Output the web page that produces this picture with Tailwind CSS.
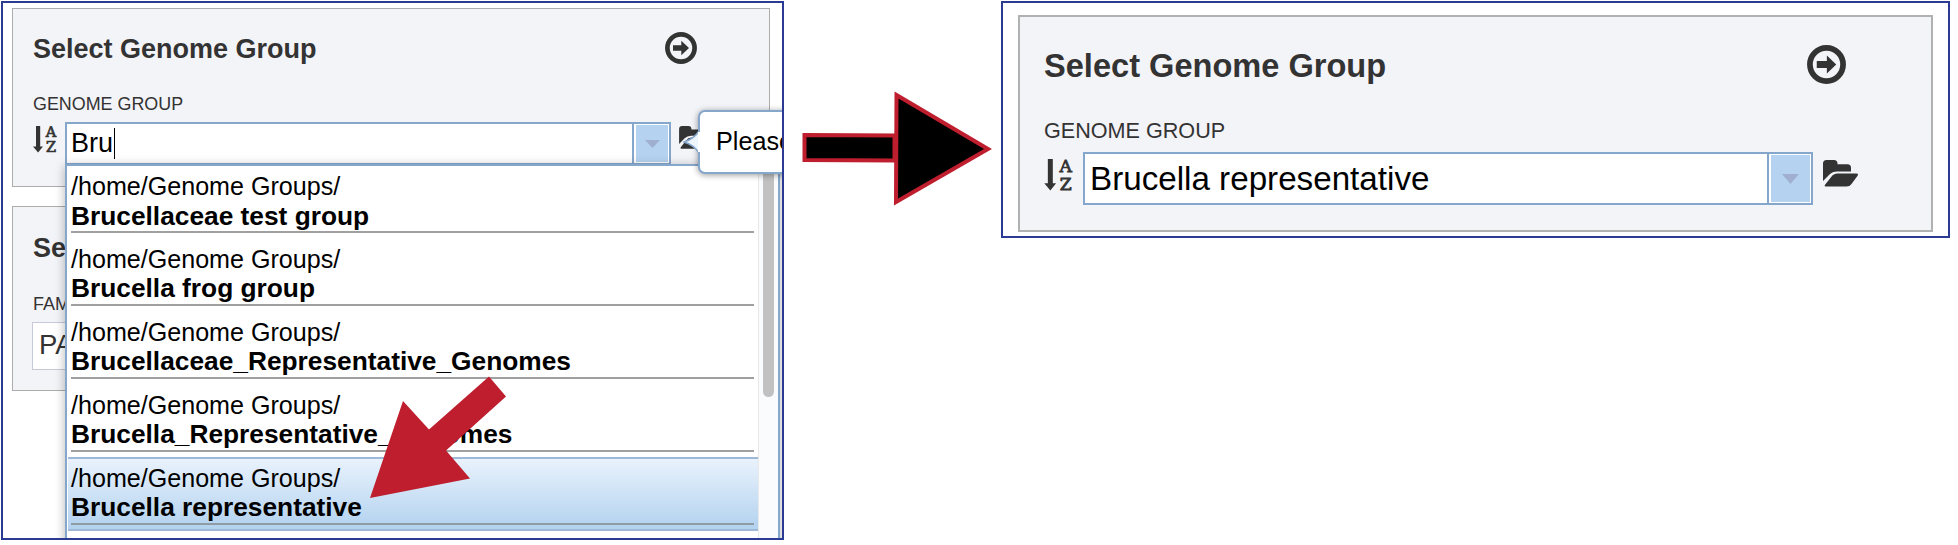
<!DOCTYPE html>
<html lang="en">
<head>
<meta charset="utf-8">
<title>Select Genome Group</title>
<script src="https://cdn.jsdelivr.net/npm/@tailwindcss/browser@4"></script>
</head>
<body class="bg-white font-['Liberation_Sans',Arial,sans-serif] w-[1958px] h-[545px] overflow-hidden">
<svg class="hidden">
  <symbol id="go" viewBox="0 0 32 32"><circle cx="16" cy="16" r="13.6" fill="none" stroke="#333" stroke-width="4.7"/><path fill="#333" d="M8 13.2h8.3V8.7L24 16l-7.700 7.300v-4.500H8z"/></symbol>
  <symbol id="folder" viewBox="0 0 35 27"><path fill="#333" d="M0 21V3.500Q0 0 3.500 0H11Q14.500 0 14.500 3.500V4.200H24.500Q28 4.200 28 7.700V11.500H14Q9.500 11.500 6.500 14.500zM2 24.800L8 17.200Q10.500 13.600 14.500 13.600H33.500Q36 13.600 34.400 16L28.500 24Q26.800 26.600 23.500 26.600H2.800Q1 26.600 2 24.800z"/></symbol>
  <symbol id="sort" viewBox="0 0 24 27"><path fill="#333" d="M3 0H7.200V20.500H10L5.100 26.600 0 20.500H3z"/><g fill="#333" font-family="DejaVu Serif" font-size="14.500" font-weight="400" stroke="#333" stroke-width=".7" text-anchor="middle"><text x="18" y="11.300">A</text><text x="18" y="26">Z</text></g></symbol>
</svg>
<main class="flex items-start pl-px pt-px">
  <section class="relative w-[783px] h-[539px] shrink-0 overflow-hidden border-2 border-[#2b3b94] pl-[9px] pt-[5px]">
    <div class="w-[758px] h-[179px] border border-[#acacac] bg-[#f3f4f8] pl-5 pt-6 flex flex-col">
      <div class="flex justify-between items-center h-8 w-[664px]">
        <h2 class="text-[27px] leading-8 font-bold text-[#333]">Select Genome Group</h2>
        <svg class="size-8 -mt-0.5"><use href="#go"/></svg>
      </div>
      <div class="mt-[29px] text-[17.900px] leading-5 text-[#333]">GENOME GROUP</div>
      <div class="mt-2 flex items-start">
        <svg class="w-6 h-[27px] mt-1 mr-2"><use href="#sort"/></svg>
        <div class="flex w-[606px] h-[43px] border-2 border-[#86a7cc] bg-white">
          <div class="flex-1 pl-1 flex items-center text-[27px] leading-9 text-black"><span class="-mt-0.5">Bru</span><span class="w-px h-[31px] bg-black ml-px"></span></div>
          <div class="w-[37px] border-l-2 border-[#86a7cc] p-px pl-0.5"><div class="size-full bg-[#b5d3f0] flex items-center justify-center"><svg class="w-[15px] h-2"><path d="M0 0H15L7.500 8z" fill="#a0aed0"/></svg></div></div>
        </div>
        <svg class="w-[30px] h-[23px] ml-2 mt-1"><use href="#folder"/></svg>
      </div>
    </div>
    <div class="mt-[19px] w-[758px] h-[185px] border border-[#acacac] bg-[#f3f4f8] pl-5 pt-[25px]">
      <h2 class="text-[27px] leading-8 font-bold text-[#333]">Select</h2>
      <div class="mt-[30px] text-[18px] leading-5 text-[#333]">FAMILY</div>
      <div class="mt-2 -ml-px w-[640px] h-12 border border-[#c5c9da] bg-white pl-1.5 text-[27.500px] leading-[43px] text-[#333]">PATRIC</div>
    </div>
    <div class="absolute left-[62px] top-[161px] w-[715px] h-[400px] border-2 border-[#86a7cc] bg-white shadow-[0_2px_10px_rgba(0,0,0,0.3)] flex">
      <div class="flex-1 pl-px">
        <div class="h-[73px] pl-[3px] pr-1 pt-1.5"><div class="text-[25.100px] leading-[29px]">/home/Genome Groups/</div><div class="text-[26.300px] leading-[30px] font-bold border-b-2 border-[#a0a0a0]">Brucellaceae test group</div></div>
        <div class="h-[73px] pl-[3px] pr-1 pt-1.5"><div class="text-[25.100px] leading-[29px]">/home/Genome Groups/</div><div class="text-[26.300px] leading-[29px] pb-px font-bold border-b-2 border-[#a0a0a0]">Brucella frog group</div></div>
        <div class="h-[73px] pl-[3px] pr-1 pt-1.5"><div class="text-[25.100px] leading-[29px]">/home/Genome Groups/</div><div class="text-[26.300px] leading-[29px] pb-px font-bold border-b-2 border-[#a0a0a0]">Brucellaceae_Representative_Genomes</div></div>
        <div class="h-[73px] pl-[3px] pr-1 pt-1.5"><div class="text-[25.100px] leading-[29px]">/home/Genome Groups/</div><div class="text-[26.300px] leading-[29px] pb-px font-bold border-b-2 border-[#a0a0a0]">Brucella_Representative_Genomes</div></div>
        <div class="-mt-px h-[74px] pl-[3px] pr-1 pt-[5px] border-y-2 border-[#9db9d7] bg-linear-to-b from-[#e9f2fc] to-[#b2d2ef]"><div class="text-[25.100px] leading-[29px]">/home/Genome Groups/</div><div class="text-[26.300px] leading-[29px] pb-px font-bold border-b-2 border-[#8f9ca6]">Brucella representative</div></div>
      </div>
      <div class="w-[20px] border-l border-[#e8e8e8] bg-[#fafbfc] pl-1"><div class="w-[11px] h-[231px] rounded-full bg-[#c1c1c1]"></div></div>
    </div>
    <div class="absolute left-[695px] top-[107px] w-[130px] h-16 rounded-[7px] border-2 border-[#86a7cc] bg-white shadow-[0_1px_6px_rgba(0,0,0,0.4)] pl-4 text-[25.200px] leading-[59px]">Please</div>
    <svg class="absolute left-[680px] top-[126px] w-[19px] h-[26px]"><path d="M16 2Q11 10 1 13Q11 16 16 24" fill="#eef6fd" stroke="#86a7cc" stroke-width="1.500"/><path d="M15 3H19V23H15z" fill="#fff"/></svg>
    <svg class="absolute left-[367px] top-[373px] w-[142px] h-[127px]"><path d="M119 .500L136 20.500 76 74.500 100 102.500 0 122 33 25 59 53.500z" fill="#be1e2d"/></svg>
  </section>
  <svg class="w-[192px] h-[118px] ml-[17px] mt-[88px] shrink-0"><g fill="#000" stroke="#be1e2d" stroke-width="4"><path d="M3.500 46L93.500 46.500V71.500L3.500 71z"/><path d="M95.500 6L187 60 95 113z"/></g></svg>
  <section class="w-[949px] h-[237px] ml-2 shrink-0 border-2 border-[#2b3b94] pl-[15px] pt-3">
    <div class="w-[915px] h-[217px] border-2 border-[#b0b1b1] bg-[#f3f4f8] pl-6 pt-[29px] flex flex-col">
      <div class="flex justify-between items-center h-10 w-[802px]">
        <h2 class="text-[32.600px] leading-10 font-bold text-[#333]">Select Genome Group</h2>
        <svg class="size-[39px] -mt-1"><use href="#go"/></svg>
      </div>
      <div class="mt-[33px] text-[21.600px] leading-6 text-[#333]">GENOME GROUP</div>
      <div class="mt-[9px] flex items-start">
        <svg class="w-[29px] h-8 mt-[7px] mr-2.5"><use href="#sort" width="29" height="32"/></svg>
        <div class="flex w-[730px] h-[53px] border-2 border-[#86a7cc] bg-white">
          <div class="flex-1 pl-[5px] text-[33.200px] leading-[49px] text-black">Brucella representative</div>
          <div class="w-[44px] border-l-2 border-[#86a7cc] p-px pl-0.5"><div class="size-full bg-[#b5d3f0] flex items-center justify-center"><svg class="w-[17px] h-2.5"><path d="M0 0H17L8.500 10z" fill="#a0aed0"/></svg></div></div>
        </div>
        <svg class="w-[35px] h-[27px] ml-2.5 mt-2"><use href="#folder"/></svg>
      </div>
    </div>
  </section>
</main>
</body>
</html>
